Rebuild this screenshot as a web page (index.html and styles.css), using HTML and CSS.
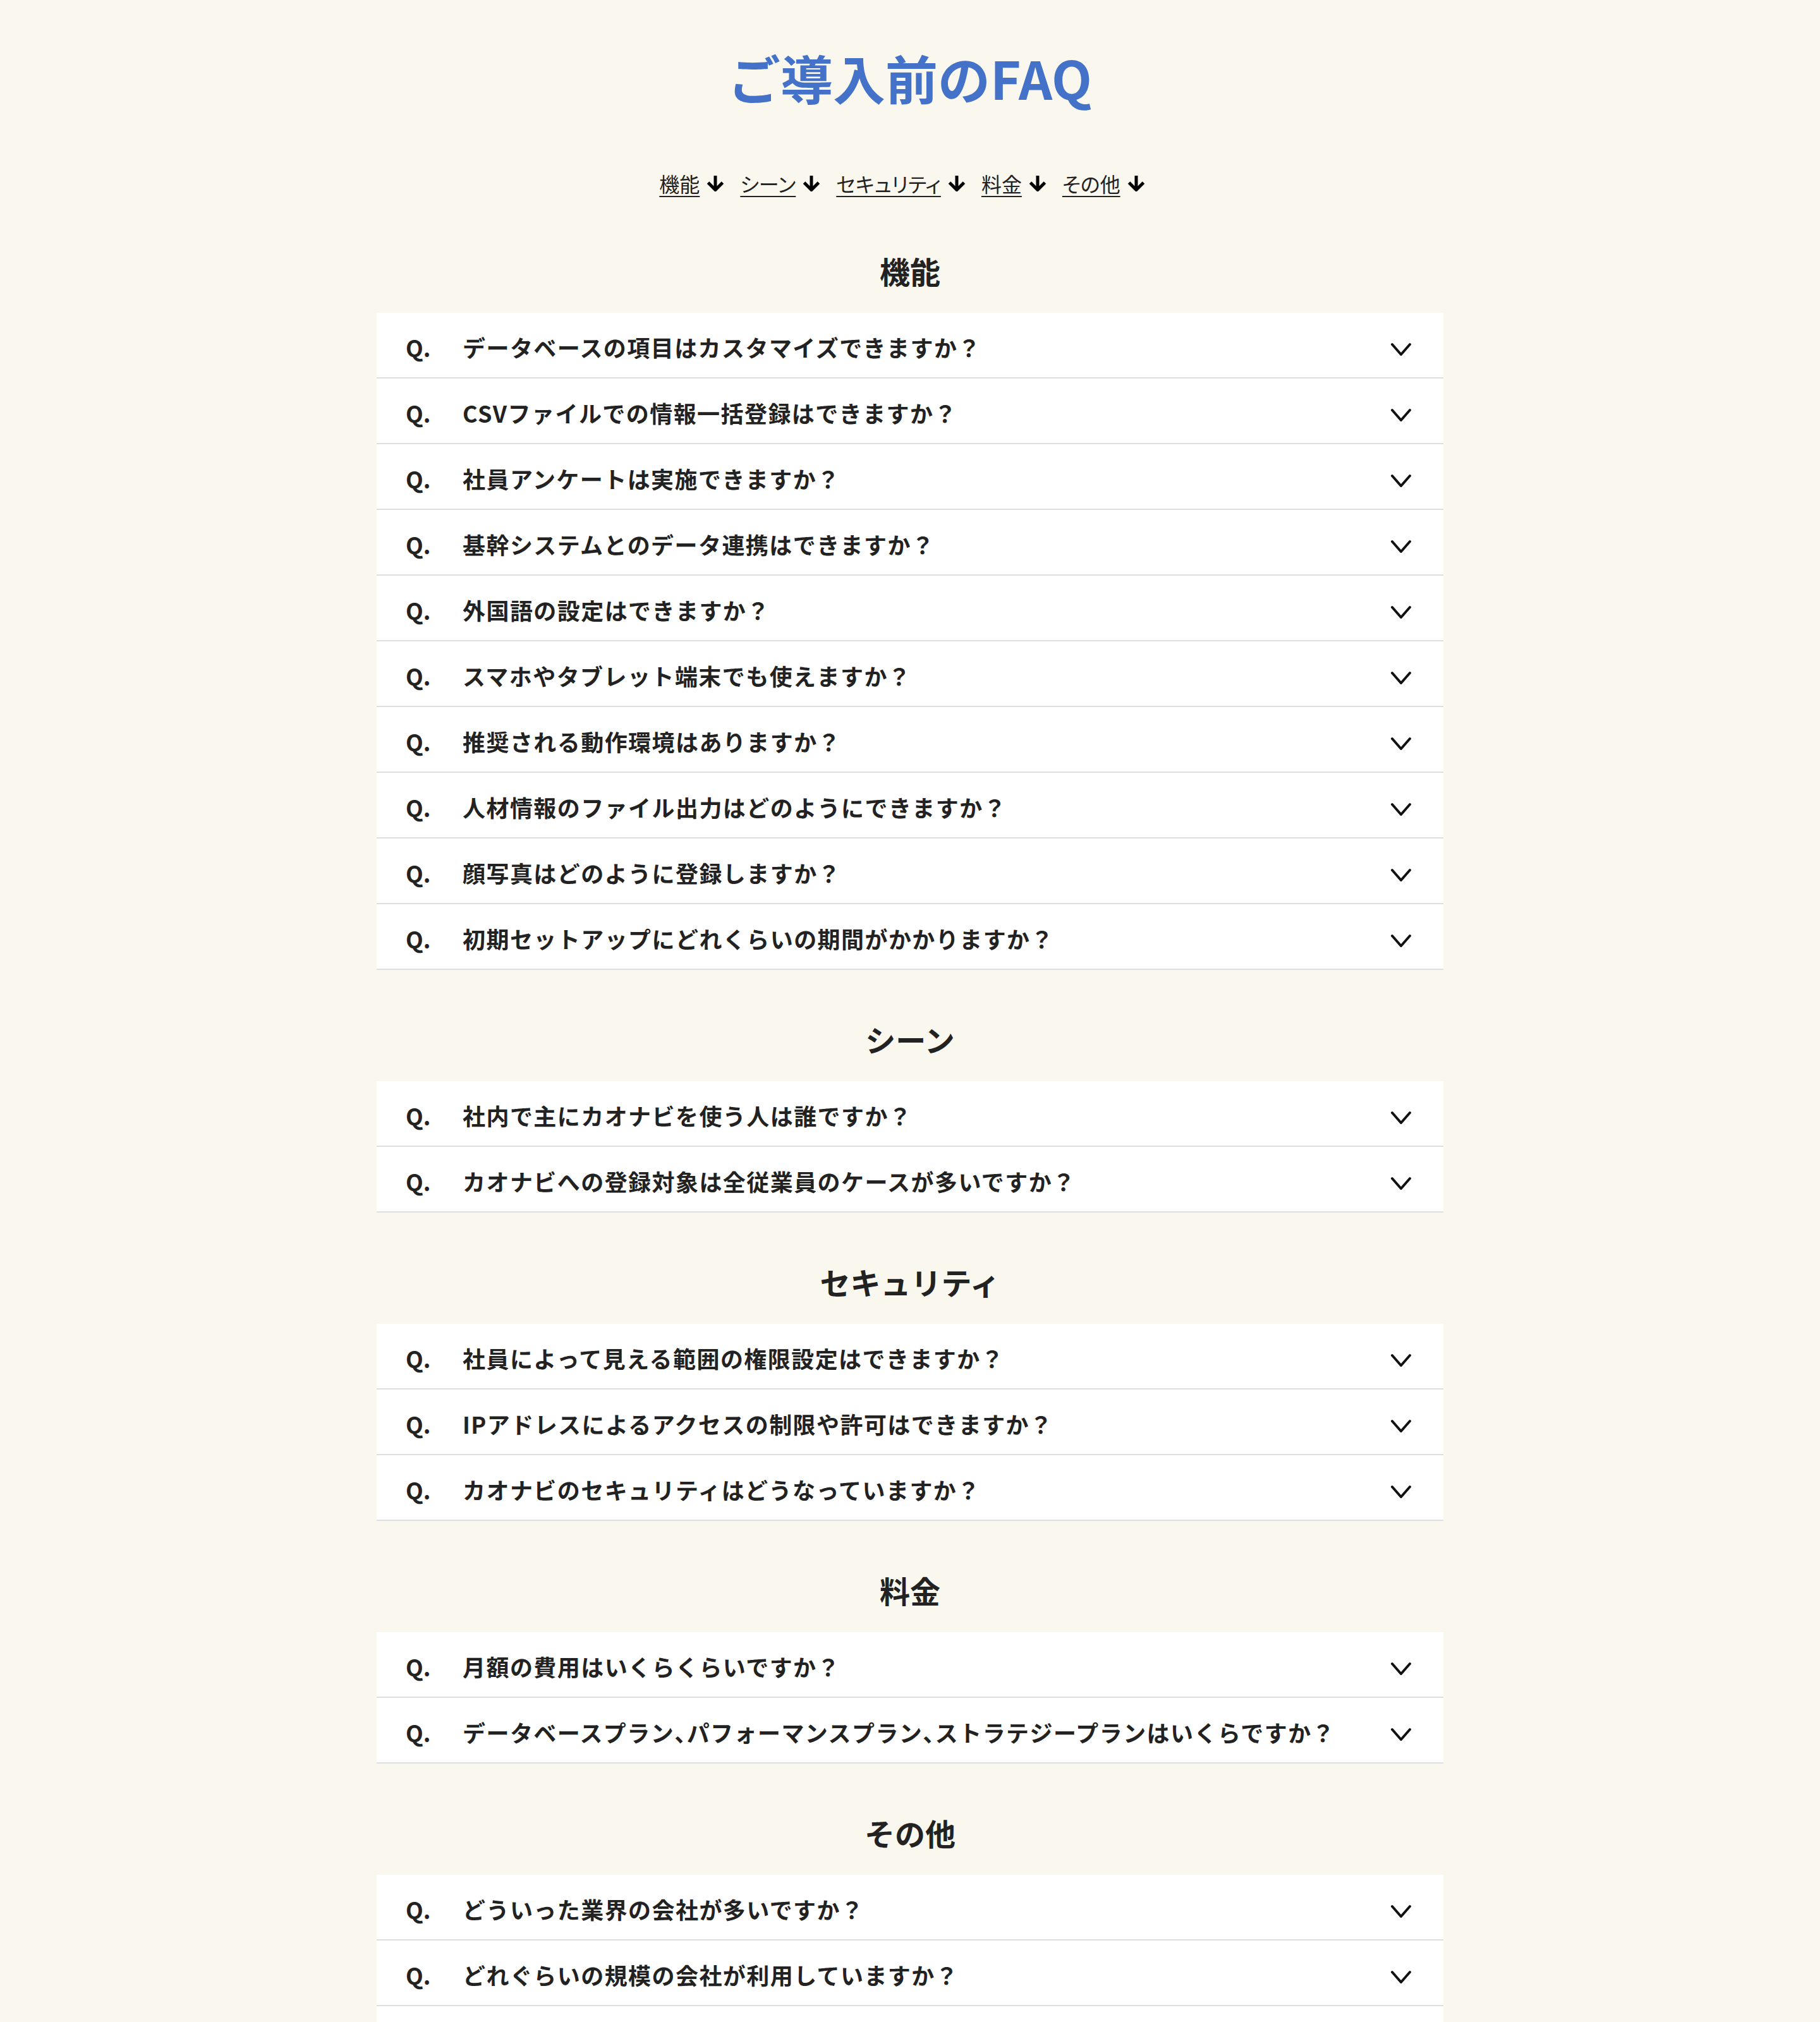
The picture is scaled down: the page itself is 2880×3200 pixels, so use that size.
FILE: index.html
```html
<!DOCTYPE html>
<html lang="ja">
<head>
    <meta charset="UTF-8">
    <meta name="viewport" content="width=device-width, initial-scale=1.0">
    <title>ご導入前のFAQ</title>
    <link rel="stylesheet" href="styles.css">
</head>
<body>
<div class="faq">
    <h1 class="faq-title">ご導入前のFAQ</h1>

    <!-- Category links -->
    <nav class="faq-nav">
        <a class="nav-item" href="#function"><span class="nav-text">機能</span><svg class="nav-arrow" viewBox="0 0 28 26"><path d="M14 1 V23 M2.5 12 L14 23.5 L25.5 12"/></svg></a>
        <a class="nav-item" href="#scene"><span class="nav-text">シーン</span><svg class="nav-arrow" viewBox="0 0 28 26"><path d="M14 1 V23 M2.5 12 L14 23.5 L25.5 12"/></svg></a>
        <a class="nav-item" href="#security"><span class="nav-text">セキュリティ</span><svg class="nav-arrow" viewBox="0 0 28 26"><path d="M14 1 V23 M2.5 12 L14 23.5 L25.5 12"/></svg></a>
        <a class="nav-item" href="#price"><span class="nav-text">料金</span><svg class="nav-arrow" viewBox="0 0 28 26"><path d="M14 1 V23 M2.5 12 L14 23.5 L25.5 12"/></svg></a>
        <a class="nav-item" href="#other"><span class="nav-text">その他</span><svg class="nav-arrow" viewBox="0 0 28 26"><path d="M14 1 V23 M2.5 12 L14 23.5 L25.5 12"/></svg></a>
    </nav>

    <!-- 機能 -->
    <section class="faq-section" id="function">
        <h2 class="section-title">機能</h2>
        <div class="faq-list">
            <div class="faq-item"><span class="q">Q.</span><span class="q-text">データベースの項目はカスタマイズできますか？</span><svg class="chevron" viewBox="0 0 32 23"><path d="M2 3 L16 19 L30 3"/></svg></div>
            <div class="faq-item"><span class="q">Q.</span><span class="q-text">CSVファイルでの情報一括登録はできますか？</span><svg class="chevron" viewBox="0 0 32 23"><path d="M2 3 L16 19 L30 3"/></svg></div>
            <div class="faq-item"><span class="q">Q.</span><span class="q-text">社員アンケートは実施できますか？</span><svg class="chevron" viewBox="0 0 32 23"><path d="M2 3 L16 19 L30 3"/></svg></div>
            <div class="faq-item"><span class="q">Q.</span><span class="q-text">基幹システムとのデータ連携はできますか？</span><svg class="chevron" viewBox="0 0 32 23"><path d="M2 3 L16 19 L30 3"/></svg></div>
            <div class="faq-item"><span class="q">Q.</span><span class="q-text">外国語の設定はできますか？</span><svg class="chevron" viewBox="0 0 32 23"><path d="M2 3 L16 19 L30 3"/></svg></div>
            <div class="faq-item"><span class="q">Q.</span><span class="q-text">スマホやタブレット端末でも使えますか？</span><svg class="chevron" viewBox="0 0 32 23"><path d="M2 3 L16 19 L30 3"/></svg></div>
            <div class="faq-item"><span class="q">Q.</span><span class="q-text">推奨される動作環境はありますか？</span><svg class="chevron" viewBox="0 0 32 23"><path d="M2 3 L16 19 L30 3"/></svg></div>
            <div class="faq-item"><span class="q">Q.</span><span class="q-text">人材情報のファイル出力はどのようにできますか？</span><svg class="chevron" viewBox="0 0 32 23"><path d="M2 3 L16 19 L30 3"/></svg></div>
            <div class="faq-item"><span class="q">Q.</span><span class="q-text">顔写真はどのように登録しますか？</span><svg class="chevron" viewBox="0 0 32 23"><path d="M2 3 L16 19 L30 3"/></svg></div>
            <div class="faq-item"><span class="q">Q.</span><span class="q-text">初期セットアップにどれくらいの期間がかかりますか？</span><svg class="chevron" viewBox="0 0 32 23"><path d="M2 3 L16 19 L30 3"/></svg></div>
        </div>
    </section>

    <!-- シーン -->
    <section class="faq-section" id="scene">
        <h2 class="section-title">シーン</h2>
        <div class="faq-list">
            <div class="faq-item"><span class="q">Q.</span><span class="q-text">社内で主にカオナビを使う人は誰ですか？</span><svg class="chevron" viewBox="0 0 32 23"><path d="M2 3 L16 19 L30 3"/></svg></div>
            <div class="faq-item"><span class="q">Q.</span><span class="q-text">カオナビへの登録対象は全従業員のケースが多いですか？</span><svg class="chevron" viewBox="0 0 32 23"><path d="M2 3 L16 19 L30 3"/></svg></div>
        </div>
    </section>

    <!-- セキュリティ -->
    <section class="faq-section" id="security">
        <h2 class="section-title">セキュリティ</h2>
        <div class="faq-list">
            <div class="faq-item"><span class="q">Q.</span><span class="q-text">社員によって見える範囲の権限設定はできますか？</span><svg class="chevron" viewBox="0 0 32 23"><path d="M2 3 L16 19 L30 3"/></svg></div>
            <div class="faq-item"><span class="q">Q.</span><span class="q-text">IPアドレスによるアクセスの制限や許可はできますか？</span><svg class="chevron" viewBox="0 0 32 23"><path d="M2 3 L16 19 L30 3"/></svg></div>
            <div class="faq-item"><span class="q">Q.</span><span class="q-text">カオナビのセキュリティはどうなっていますか？</span><svg class="chevron" viewBox="0 0 32 23"><path d="M2 3 L16 19 L30 3"/></svg></div>
        </div>
    </section>

    <!-- 料金 -->
    <section class="faq-section" id="price">
        <h2 class="section-title">料金</h2>
        <div class="faq-list">
            <div class="faq-item"><span class="q">Q.</span><span class="q-text">月額の費用はいくらくらいですか？</span><svg class="chevron" viewBox="0 0 32 23"><path d="M2 3 L16 19 L30 3"/></svg></div>
            <div class="faq-item"><span class="q">Q.</span><span class="q-text">データベースプラン<span class="yaku">、</span>パフォーマンスプラン<span class="yaku">、</span>ストラテジープランはいくらですか？</span><svg class="chevron" viewBox="0 0 32 23"><path d="M2 3 L16 19 L30 3"/></svg></div>
        </div>
    </section>

    <!-- その他 -->
    <section class="faq-section" id="other">
        <h2 class="section-title">その他</h2>
        <div class="faq-list">
            <div class="faq-item"><span class="q">Q.</span><span class="q-text">どういった業界の会社が多いですか？</span><svg class="chevron" viewBox="0 0 32 23"><path d="M2 3 L16 19 L30 3"/></svg></div>
            <div class="faq-item"><span class="q">Q.</span><span class="q-text">どれぐらいの規模の会社が利用していますか？</span><svg class="chevron" viewBox="0 0 32 23"><path d="M2 3 L16 19 L30 3"/></svg></div>
            <div class="faq-item"><span class="q">Q.</span><span class="q-text">導入後のサポートはありますか？</span><svg class="chevron" viewBox="0 0 32 23"><path d="M2 3 L16 19 L30 3"/></svg></div>
        </div>
    </section>
</div>
</body>
</html>
```

FILE: styles.css
```css
body {
    margin: 0;
    background-color: #faf8ee;
    color: #222;
    font-family: "Noto Sans CJK JP", "Noto Sans", sans-serif;
}

.faq {
    width: 1688px;
    margin: 0 auto;
    padding: 66px 0 120px;
}

.faq-title {
    margin: 0;
    font-size: 83px;
    line-height: 112px;
    font-weight: 700;
    color: #4472c8;
    text-align: center;
}

/* Category links */
.faq-nav {
    display: flex;
    justify-content: center;
    margin-top: 88px;
    line-height: 48px;
}

.nav-item {
    display: flex;
    align-items: center;
    margin-right: 25px;
    color: #222;
    font-size: 32px;
    text-decoration: none;
}

.nav-text {
    font-feature-settings: "palt";
    text-decoration: underline;
    text-decoration-thickness: 2px;
    text-underline-offset: 6px;
}

.nav-arrow {
    width: 28px;
    height: 26px;
    margin-left: 11px;
    fill: none;
    stroke: #000;
    stroke-width: 5;
}

/* Sections */
.faq-section {
    margin-top: 78px;
}

.faq-section + .faq-section {
    margin-top: 73px;
}

.section-title {
    margin: 0 0 31px;
    font-size: 48px;
    line-height: 72px;
    font-weight: 700;
    text-align: center;
}

.faq-list {
    background: #fff;
}

.faq-item {
    display: flex;
    align-items: center;
    box-sizing: border-box;
    height: 104px;
    padding: 6px 51px 0 46px;
    border-bottom: 2px solid #dedede;
    font-size: 36px;
    font-weight: 700;
    cursor: pointer;
}

.q {
    width: 90px;
    flex-shrink: 0;
}

.q-text {
    flex: 1;
    letter-spacing: 0.04em;
}

/* half-width touten, like YakuHan */
.yaku {
    letter-spacing: -0.46em;
}

.chevron {
    width: 32px;
    height: 23px;
    margin-top: 8px;
    fill: none;
    stroke: #111;
    stroke-width: 4;
    stroke-linecap: round;
    stroke-linejoin: round;
}
```
